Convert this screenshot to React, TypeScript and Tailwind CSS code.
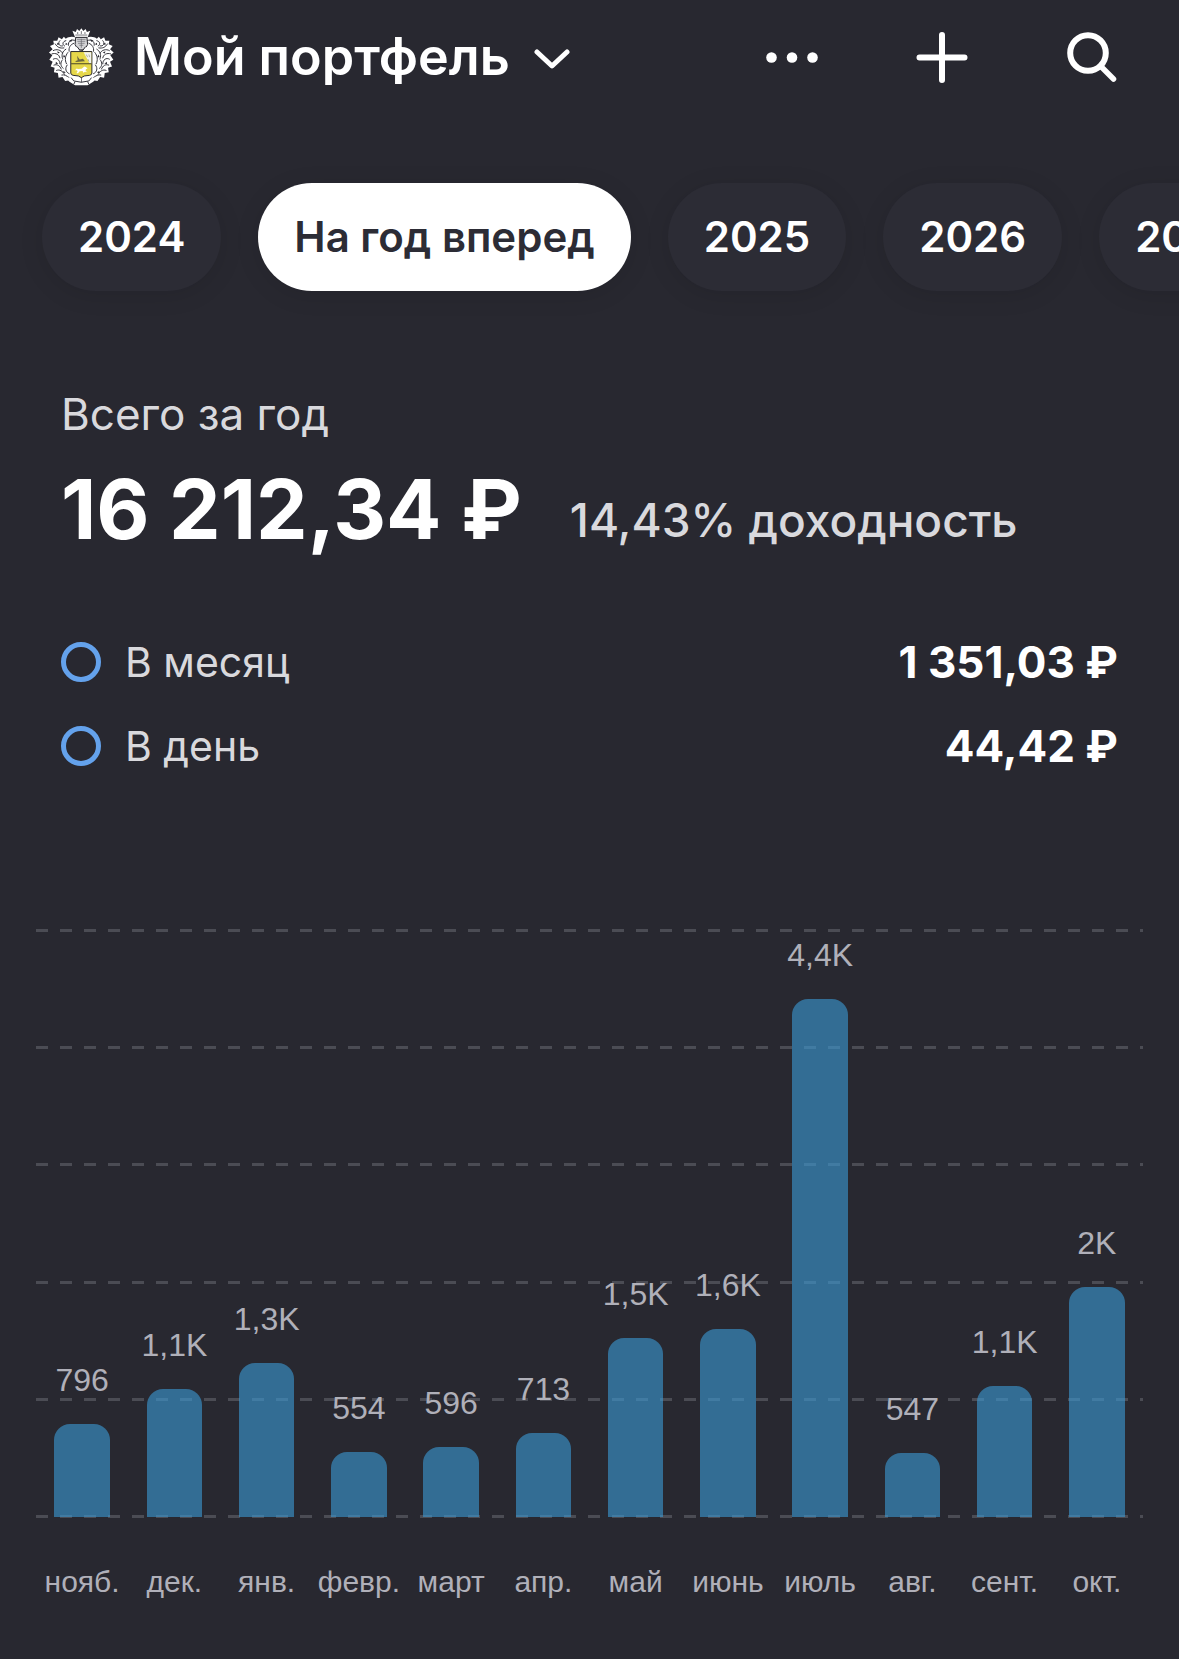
import React from "react";

const periods = ["2024", "На год вперед", "2025", "2026", "2027"];

const averages = [
  { id: "month", label: "В месяц", value: "1 351,03 ₽" },
  { id: "day", label: "В день", value: "44,42 ₽" },
];

const axisMax = 5000;

const months = [
  { name: "нояб.", value: 796, label: "796" },
  { name: "дек.", value: 1090, label: "1,1K" },
  { name: "янв.", value: 1310, label: "1,3K" },
  { name: "февр.", value: 554, label: "554" },
  { name: "март", value: 596, label: "596" },
  { name: "апр.", value: 713, label: "713" },
  { name: "май", value: 1528, label: "1,5K" },
  { name: "июнь", value: 1600, label: "1,6K" },
  { name: "июль", value: 4410, label: "4,4K" },
  { name: "авг.", value: 547, label: "547" },
  { name: "сент.", value: 1115, label: "1,1K" },
  { name: "окт.", value: 1960, label: "2K" },
];

/* One side of the mantling; the other side is its mirror image. */
function Mantling() {
  return (
    <g>
      <path
        d="M136 84 C126 78 112 80 104 86 L98 80 L92 88 L82 82 L78 92 L66 92 L68 103 L56 108 L64 118 L53 128 L63 136 L54 150 L64 156 L58 170 L70 174 L68 188 L80 190 L82 204 L94 202 L102 214 L116 212 L126 222 L150 226 L150 120 Z"
        fill="#fff"
      />
      <path
        d="M134 92 C120 86 110 94 112 106 M128 100 C118 104 112 112 114 124 M104 92 C94 94 92 104 100 108 M86 92 C78 100 84 110 94 108 M72 102 C78 112 86 116 98 114 M66 122 C76 116 90 120 94 130 M62 132 C74 128 84 134 86 144 M104 118 C94 124 90 134 94 146 M110 128 C102 138 100 150 106 162 M66 148 C76 142 86 150 86 162 M94 150 C86 158 88 170 96 176 M68 166 C78 162 86 168 90 178 M108 166 C100 176 104 188 114 192 M76 182 C86 178 94 184 100 194 M92 196 C100 194 106 198 114 204"
        fill="none"
        stroke="#33333a"
        strokeWidth="3"
        strokeLinecap="round"
      />
      <path d="M114 92 l10 -4 -4 8z M78 98 l8 4 -8 3z M78 124 l8 4 -6 3z M98 134 l5 8 -7 0z M74 156 l7 6 -8 1z M96 184 l8 4 -7 3z M104 98 l6 5 -7 2z" fill="#28282f" />
    </g>
  );
}

function CrestLogo() {
  return (
    <svg viewBox="50 54 200 175" className="h-[58px] w-[66px] shrink-0" role="img" aria-label="Герб">
      <Mantling />
      <g transform="matrix(-1 0 0 1 302 0)">
        <Mantling />
      </g>
      <path d="M132 82 L124 62 L134 66 L138 57 L145 63 L151 54 L157 63 L164 57 L168 66 L178 62 L170 82 Z" fill="#fff" />
      <path d="M133 75 H169 M140 66 V72 M151 63 V72 M162 66 V72" stroke="#33333a" strokeWidth="2" fill="none" />
      <path d="M134 82 H168 L170 104 L160 120 H142 L132 104 Z" fill="#d4d4d6" stroke="#28282f" strokeWidth="3" />
      <path d="M138 88 H164 M139 94 H163 M141 100 H161 M145 106 H157 M151 86 V114" stroke="#66666c" strokeWidth="2" />
      <path d="M120 124 L138 110 L151 128 L164 110 L182 124 Z" fill="#fff" />
      <path d="M138 110 L151 127 L164 110" fill="none" stroke="#28282f" strokeWidth="3" />
      <path d="M119 125 H183 V190 Q183 196 176 197 L160 199 L151 204 L142 199 L126 197 Q119 196 119 190 Z" fill="#e6d84a" stroke="#28282f" strokeWidth="3" />
      <path d="M158 127 H181 V161 H176 Z" fill="#f4f4f0" />
      <path d="M120 162 H182" stroke="#4a4626" strokeWidth="3" />
      <path d="M132 154 L140 151 L138 138 L146 149 L156 147 L162 154 L152 155 L136 157 Z" fill="#6b6740" />
      <path d="M166 134 l4 8 M174 134 l2 8 M171 148 l3 7" stroke="#88887f" strokeWidth="2" />
      <path
        d="M130 183 L137 176 L141 178 L152 177 L160 170 L165 172 L170 177 L165 178 L164 184 L170 188 L162 186 L157 189 L155 184 L146 185 L141 191 L136 191 L140 184 L135 181 Z"
        fill="#fff"
      />
      <path d="M104 202 L120 206 L128 216 L151 219 L174 216 L182 206 L198 202 L188 216 L170 227 H132 L114 216 Z" fill="#fff" />
      <path d="M120 204 L128 214 L151 218 L174 214 L182 204 M132 216 L128 224 M170 216 L174 224" fill="none" stroke="#33333a" strokeWidth="3" />
    </svg>
  );
}

function Header() {
  return (
    <header className="flex h-[114px] items-center justify-between pr-[60px] pl-12">
      <button type="button" className="flex items-center">
        <CrestLogo />
        <span className="ml-5 text-[52px] leading-[64px] font-semibold whitespace-nowrap">Мой портфель</span>
        <svg viewBox="0 0 36 20" className="mt-1 ml-6 h-5 w-9" fill="none" stroke="currentColor" strokeWidth="5" strokeLinecap="round" strokeLinejoin="round" aria-hidden="true">
          <path d="M3 3 L18 17 L33 3" />
        </svg>
      </button>
      <div className="flex items-center gap-24">
        <button type="button" aria-label="Ещё">
          <svg viewBox="0 0 54 54" className="size-[54px]" fill="currentColor" aria-hidden="true">
            <circle cx="6.5" cy="27.5" r="5.3" />
            <circle cx="27" cy="27.5" r="5.3" />
            <circle cx="47.5" cy="27.5" r="5.3" />
          </svg>
        </button>
        <button type="button" aria-label="Добавить">
          <svg viewBox="0 0 54 54" className="size-[54px]" fill="none" stroke="currentColor" strokeWidth="6" strokeLinecap="round" aria-hidden="true">
            <path d="M27 5 V50 M4.500 27.500 H49.500" />
          </svg>
        </button>
        <button type="button" aria-label="Поиск">
          <svg viewBox="0 0 54 54" className="size-[54px]" fill="none" stroke="currentColor" strokeLinecap="round" aria-hidden="true">
            <circle cx="23" cy="23" r="17.8" strokeWidth="6" />
            <path d="M36 36.500 L48.500 49" strokeWidth="5.500" />
          </svg>
        </button>
      </div>
    </header>
  );
}

function PeriodTabs() {
  return (
    <nav className="mt-[39px] flex gap-[37px] overflow-hidden py-[30px] pl-[42px]" aria-label="Период">
      {periods.map((period) => (
        <button
          key={period}
          type="button"
          aria-pressed={period === "На год вперед"}
          className="h-[108px] shrink-0 rounded-[54px] bg-[#2c2c35] px-9 text-[42px] leading-[52px] font-semibold whitespace-nowrap text-white shadow-[0_4px_24px_rgba(0,0,0,0.1)] aria-pressed:bg-white aria-pressed:text-[#2c2c35]"
        >
          {period}
        </button>
      ))}
    </nav>
  );
}

function Summary() {
  return (
    <section className="mt-[65px] px-[61px]">
      <p className="text-[44px] leading-[56px] text-[#d9d9dd]">Всего за год</p>
      <div className="mt-5 flex items-end gap-12 whitespace-nowrap">
        <strong className="text-[82px] leading-[96px] font-bold">16 212,34 ₽</strong>
        <span className="text-[46px] leading-[76px] font-medium text-[#d9d9dd]">14,43% доходность</span>
      </div>
      <div className="mt-[76px] flex flex-col gap-7">
        {averages.map((row) => (
          <div key={row.id} className="flex items-center justify-between">
            <label className="flex items-center gap-6 text-[41px] leading-[56px] text-[#d9d9dd]">
              <input
                type="radio"
                name="average"
                value={row.id}
                className="size-10 appearance-none rounded-full border-[5px] border-[#64a2ec]"
              />
              {row.label}
            </label>
            <span className="text-[44px] leading-[56px] font-bold">{row.value}</span>
          </div>
        ))}
      </div>
    </section>
  );
}

function GridLines() {
  return (
    <div className="absolute inset-x-0 -inset-y-px flex flex-col justify-between" aria-hidden="true">
      {[5, 4, 3, 2, 1, 0].map((level) => (
        <div
          key={level}
          className="h-[3px] bg-[repeating-linear-gradient(90deg,#4b4c54_0px,#4b4c54_12px,transparent_12px,transparent_24px)]"
        />
      ))}
    </div>
  );
}

function MonthlyChart() {
  return (
    <figure className="mt-[156px] px-9 pb-[59px] font-['Liberation_Sans',sans-serif] text-[#b0b0b9]">
      <div className="relative h-[587px]">
        <GridLines />
        <div className="relative grid h-full grid-cols-12">
          {months.map((month) => (
            <div key={month.name} className="flex h-full flex-col items-center justify-end">
              <span className="mb-[26px] text-[32px] leading-9">{month.label}</span>
              <div
                className="w-3/5 shrink-0 rounded-t-2xl bg-[#3a9bd7]/60"
                style={{ height: `${(month.value / axisMax) * 100}%` }}
              />
            </div>
          ))}
        </div>
      </div>
      <div className="mt-[47px] grid grid-cols-12">
        {months.map((month) => (
          <span key={month.name} className="flex justify-center text-[30px] leading-9 whitespace-nowrap">
            {month.name}
          </span>
        ))}
      </div>
    </figure>
  );
}

export default function App() {
  return (
    <main className="min-h-screen overflow-hidden bg-[#282830] font-[Inter,sans-serif] text-white">
      <Header />
      <PeriodTabs />
      <Summary />
      <MonthlyChart />
    </main>
  );
}
